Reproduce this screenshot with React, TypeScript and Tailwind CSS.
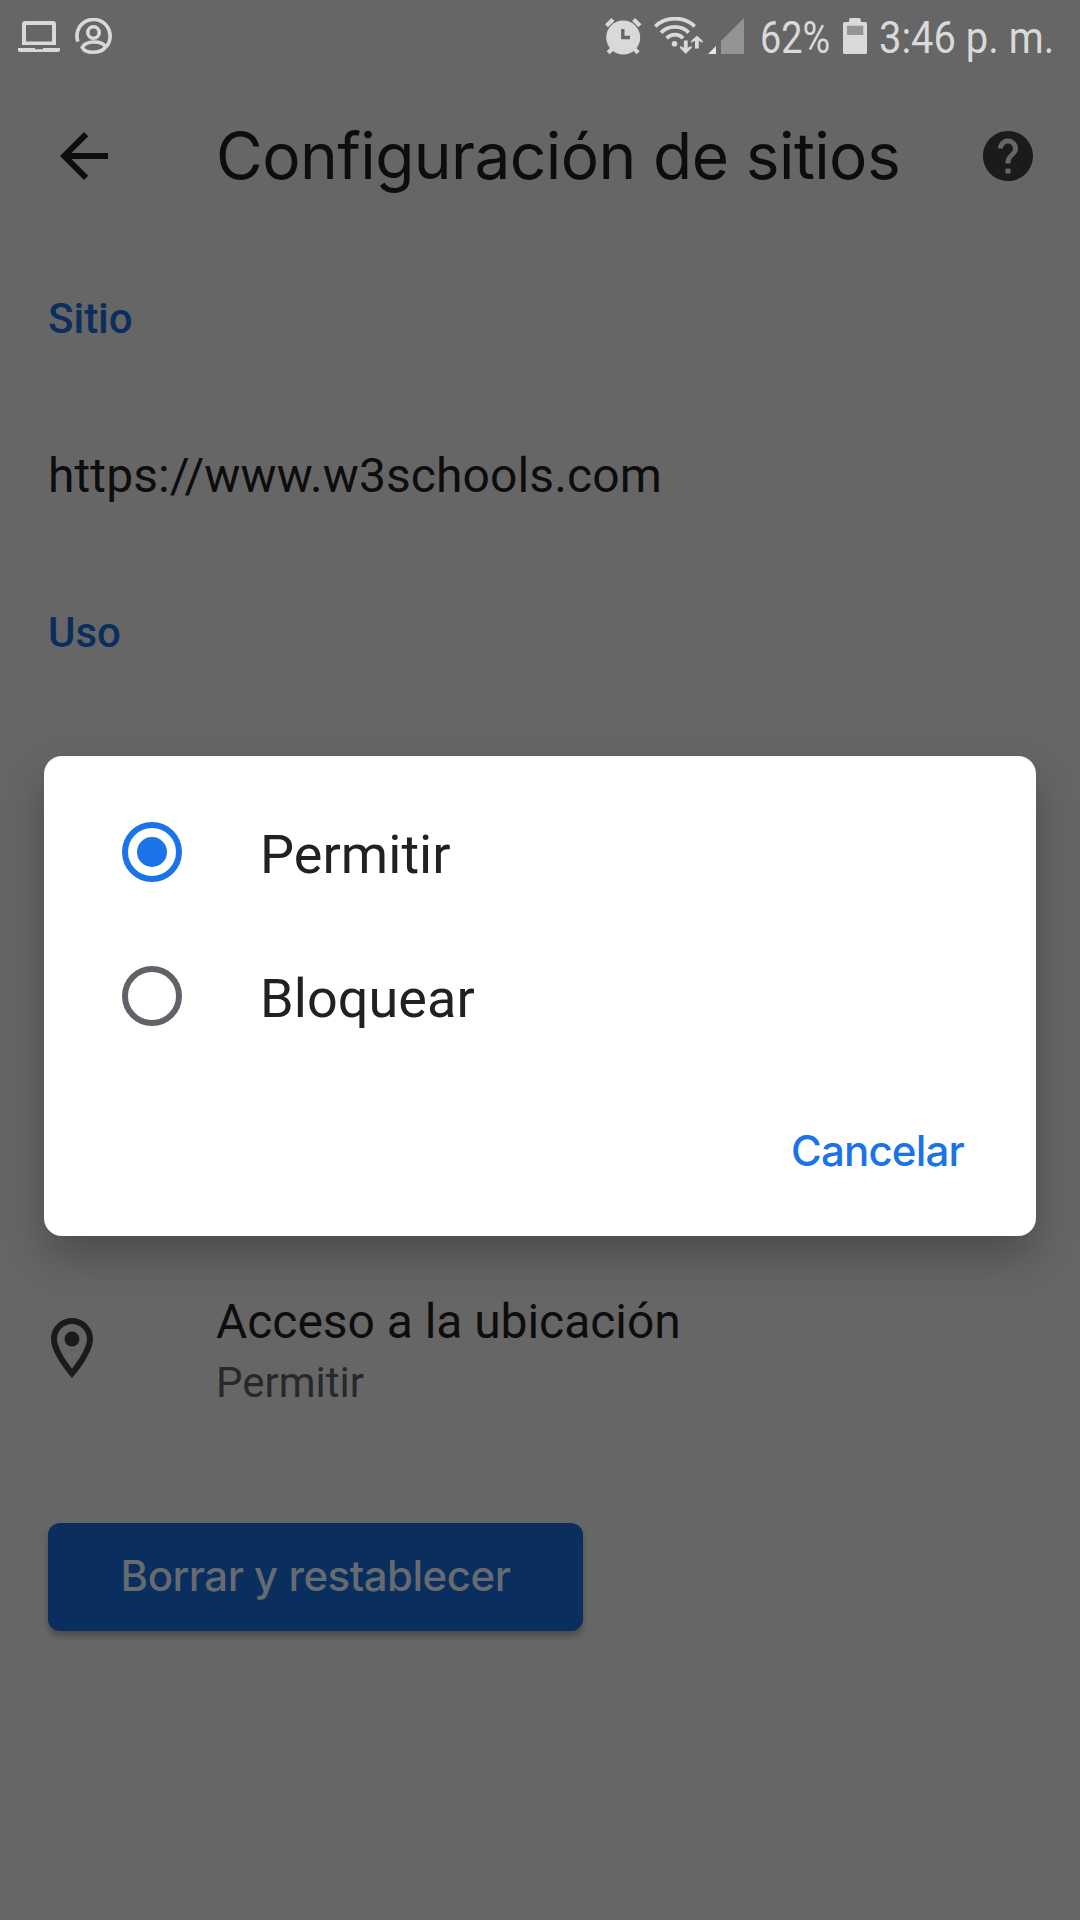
import type { ReactNode } from "react";

const ROBOTO = "font-['Roboto','Liberation_Sans',sans-serif]";
const DISPLAY = "font-['Inter','Liberation_Sans',sans-serif]";

function LaptopIcon() {
  return (
    <svg className="h-[31px] w-[42px]" viewBox="0 0 42 31">
      <path d="M7 0H35Q38 0 38 3V24H4V3Q4 0 7 0ZM8 4V20.5H34V4Z" fillRule="evenodd" fill="#d9d9d9" />
      <path d="M0 27H17V28.3H25V27H42V29Q42 31 40 31H2Q0 31 0 29Z" fill="#d9d9d9" />
    </svg>
  );
}

function ProfileIcon() {
  return (
    <svg className="h-[37px] w-[38px]" viewBox="0 0 38 37" fill="none" stroke="#d9d9d9" strokeWidth="3.6">
      <path d="M2.9 23.6A16.6 16.6 0 1 1 30.4 29.6" />
      <circle cx="18.5" cy="14.5" r="5.7" />
      <path d="M7.3 29.3C11 22.3 26.4 22.3 30.4 28.5C27.5 36 10 36 7.3 29.3Z" />
    </svg>
  );
}

function AlarmIcon() {
  return (
    <svg className="h-[37px] w-[37px]" viewBox="0 0 37 37">
      <circle cx="18.2" cy="19.5" r="17" fill="#d9d9d9" />
      <path d="M1.5 7.8L8 1.6M28.6 1.6L35 7.8M8 30L3.2 34.8M28.4 30L33.2 34.8" stroke="#d9d9d9" strokeWidth="4.2" />
      <path d="M17.8 11V19.5H25" fill="none" stroke="#666" strokeWidth="3.4" />
    </svg>
  );
}

function WifiIcon() {
  return (
    <svg className="h-[37px] w-[49px]" viewBox="0 0 49 37">
      <g fill="none" stroke="#d9d9d9" strokeWidth="3.8">
        <path d="M1.3 9.3C12 -1 30 -1 40.7 9.3" />
        <path d="M7 15.6C14.5 8 27.5 8 34.6 15.6" />
        <path d="M12.6 21.2C17.6 16.4 24.6 16.4 29 21.2" />
        <path d="M31.8 23.5V33M42.9 31.5V22" />
      </g>
      <circle cx="20.5" cy="26.7" r="2.8" fill="#d9d9d9" />
      <path d="M26.4 29.5L31.8 32L37.2 29.5V31L31.8 36.5L26.4 31ZM37.4 25.2L42.9 22.5L48.4 25.2V24L42.9 19L37.4 24Z" fill="#d9d9d9" stroke="#d9d9d9" strokeWidth="0.8" />
    </svg>
  );
}

function SignalIcon() {
  return (
    <svg className="h-[36px] w-[36px]" viewBox="0 0 36 36">
      <path d="M0 36L8 28V36Z" fill="#e6e6e6" />
      <path d="M13 23L36 0V36H13Z" fill="#949494" />
    </svg>
  );
}

function BatteryIcon() {
  return (
    <svg className="h-[36px] w-[24px]" viewBox="0 0 24 36">
      <path d="M7.5 0H16Q18 0 18 4H22.5Q24 4 24 5.5V34.5Q24 36 22.5 36H1.5Q0 36 0 34.5V5.5Q0 4 1.5 4H6Q6 0 7.5 0Z" fill="#d9d9d9" />
      <rect x="4" y="7.7" width="16.3" height="9.3" fill="#949494" />
    </svg>
  );
}

function StatusBar() {
  return (
    <header className="flex h-[72px] items-center pl-[18px] text-[#d9d9d9]">
      <div className="mt-[1px]"><LaptopIcon /></div>
      <div className="ml-[15px]"><ProfileIcon /></div>
      <div className="ml-[492px]"><AlarmIcon /></div>
      <div className="ml-[12px] -mt-[1px]"><WifiIcon /></div>
      <div className="ml-[5px] -mt-[1px]"><SignalIcon /></div>
      <div className="ml-[16px] w-[83px]">
        <span className={`${ROBOTO} mt-[4px] block origin-left scale-x-[0.84] whitespace-nowrap text-[45px] leading-[72px]`}>62%</span>
      </div>
      <BatteryIcon />
      <span className={`${ROBOTO} ml-[12px] mt-[4px] block origin-left scale-x-[0.887] whitespace-nowrap text-[45px] leading-[72px]`}>3:46 p. m.</span>
    </header>
  );
}

function TopBar() {
  return (
    <div className="flex h-[168px] items-center pl-[48px]">
      <svg className="size-[72px]" viewBox="0 0 24 24" fill="#0d0d0d">
        <path d="M20 11H7.83l5.59-5.59L12 4l-8 8 8 8 1.41-1.41L7.83 13H20v-2z" />
      </svg>
      <h1 className={`${DISPLAY} ml-[96px] w-[762px] whitespace-nowrap text-[64px] leading-[84px] tracking-[-0.6px] text-[#0d0d0d]`}>
        Configuración de sitios
      </h1>
      <svg className="size-[60px] shrink-0" viewBox="0 0 24 24" fill="#191b1c">
        <path d="M12 2C6.48 2 2 6.48 2 12s4.48 10 10 10 10-4.48 10-10S17.52 2 12 2zm1 17h-2v-2h2v2zm2.07-7.75l-.9.92C13.45 12.9 13 13.5 13 15h-2v-.5c0-1.1.45-2.1 1.17-2.83l1.24-1.26c.37-.36.59-.86.59-1.41 0-1.1-.9-2-2-2s-2 .9-2 2H8c0-2.21 1.79-4 4-4s4 1.79 4 4c0 .88-.36 1.68-.93 2.25z" />
      </svg>
    </div>
  );
}

function SectionTitle({ children }: { children: ReactNode }) {
  return <h2 className="text-[42px] leading-[52px] font-medium text-[#0a2e5d]">{children}</h2>;
}

function Option({ label, checked }: { label: string; checked?: boolean }) {
  return (
    <div role="radio" aria-checked={!!checked} className="flex h-[144px] items-center pl-[78px]">
      <span className={`flex size-[60px] items-center justify-center rounded-full border-[6px] ${checked ? "border-[#1a73e8]" : "border-[#5f6368]"}`}>
        {checked && <span className="size-[30px] rounded-full bg-[#1a73e8]" />}
      </span>
      <span className="mt-[5px] ml-[78px] text-[54px] leading-[64px] tracking-[0.05px] text-[#202124]">{label}</span>
    </div>
  );
}

export default function App() {
  return (
    <div className={`${ROBOTO} relative h-[1920px] w-[1080px] overflow-hidden bg-[#666]`}>
      <StatusBar />
      <TopBar />
      <main className="flex flex-col px-[48px] pt-[53px]">
        <SectionTitle>Sitio</SectionTitle>
        <p className="mt-[103px] text-[48px] leading-[56px] tracking-[0.1px] text-[#0d0d0d]">https://www.w3schools.com</p>
        <div className="mt-[103px]"><SectionTitle>Uso</SectionTitle></div>
        <div className="-ml-[12px] mt-[633px] flex items-start">
          <svg className="mt-[20px] size-[72px]" viewBox="0 0 24 24" fill="#191b1c">
            <path d="M12 2C8.13 2 5 5.13 5 9c0 5.25 7 13 7 13s7-7.75 7-13c0-3.87-3.13-7-7-7zM7 9c0-2.76 2.24-5 5-5s5 2.24 5 5c0 2.88-2.88 7.19-5 9.88C9.92 16.21 7 11.85 7 9z" />
            <circle cx="12" cy="9" r="2.5" />
          </svg>
          <div className="ml-[108px]">
            <p className="text-[48px] leading-[60px] tracking-[-0.05px] text-[#0d0d0d]">Acceso a la ubicación</p>
            <p className="mt-[5px] text-[42px] leading-[52px] text-[#262829]">Permitir</p>
          </div>
        </div>
        <button className={`${DISPLAY} mt-[114px] h-[108px] w-[535px] rounded-[12px] bg-[#0a2e5d] pb-[3px] text-[42px] font-medium tracking-[-0.5px] whitespace-nowrap text-[#666b70] shadow-[0_5px_6px_rgba(0,0,0,0.25)]`}>
          Borrar y restablecer
        </button>
      </main>

      <div className="absolute inset-0 flex flex-col px-[44px] pt-[756px]">
        <div role="dialog" className="flex h-[480px] flex-col rounded-[18px] bg-white pt-[24px] shadow-[0_21px_44px_rgba(0,0,0,0.26)]">
          <Option label="Permitir" checked />
          <Option label="Bloquear" />
          <button className={`${DISPLAY} mt-[57px] mr-[72px] self-end text-[42px] leading-[52px] font-medium tracking-[-0.8px] text-[#1a73e8]`}>
            Cancelar
          </button>
        </div>
      </div>
    </div>
  );
}
